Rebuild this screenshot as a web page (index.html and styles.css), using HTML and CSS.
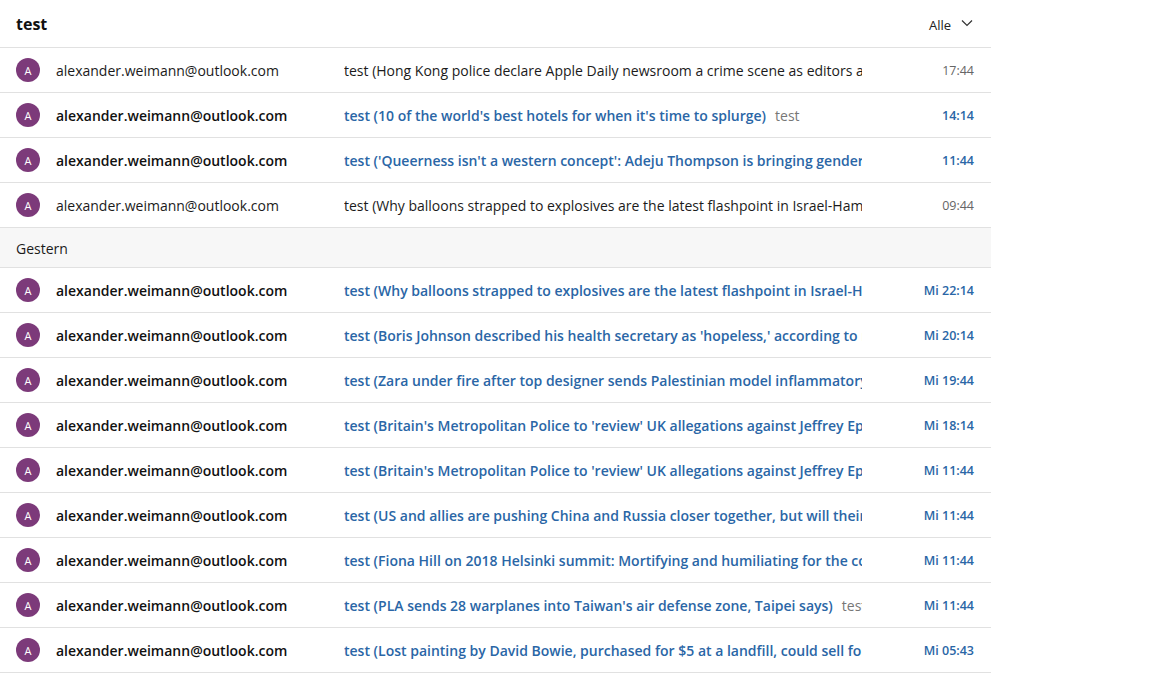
FILE: index.html
```html
<!DOCTYPE html>
<html lang="de">
<head>
<meta charset="utf-8">
<title>test</title>
<link rel="stylesheet" href="styles.css">
</head>
<body>
<div class="list">
  <div class="header">
    <div class="title">test</div>
    <div class="filter">Alle
      <svg class="chev" width="12" height="8" viewBox="0 0 12 8"><path d="M1 1.5 L6 6.5 L11 1.5" fill="none" stroke="#333" stroke-width="1.2"/></svg>
    </div>
  </div>

  <div class="row read">
    <div class="avatar">A</div>
    <div class="sender">alexander.weimann@outlook.com</div>
    <div class="subject">test (Hong Kong police declare Apple Daily newsroom a crime scene as editors are arrested)</div>
    <div class="time">17:44</div>
  </div>
  <div class="row unread">
    <div class="avatar">A</div>
    <div class="sender">alexander.weimann@outlook.com</div>
    <div class="subject">test (10 of the world's best hotels for when it's time to splurge)<span class="preview">test</span></div>
    <div class="time">14:14</div>
  </div>
  <div class="row unread">
    <div class="avatar">A</div>
    <div class="sender">alexander.weimann@outlook.com</div>
    <div class="subject">test ('Queerness isn't a western concept': Adeju Thompson is bringing gender-fluid fashion to Nigeria)</div>
    <div class="time">11:44</div>
  </div>
  <div class="row read">
    <div class="avatar">A</div>
    <div class="sender">alexander.weimann@outlook.com</div>
    <div class="subject">test (Why balloons strapped to explosives are the latest flashpoint in Israel-Hamas tensions)</div>
    <div class="time">09:44</div>
  </div>

  <div class="group">Gestern</div>

  <div class="row unread">
    <div class="avatar">A</div>
    <div class="sender">alexander.weimann@outlook.com</div>
    <div class="subject">test (Why balloons strapped to explosives are the latest flashpoint in Israel-Hamas tensions)</div>
    <div class="time">Mi 22:14</div>
  </div>
  <div class="row unread">
    <div class="avatar">A</div>
    <div class="sender">alexander.weimann@outlook.com</div>
    <div class="subject">test (Boris Johnson described his health secretary as 'hopeless,' according to messages)</div>
    <div class="time">Mi 20:14</div>
  </div>
  <div class="row unread">
    <div class="avatar">A</div>
    <div class="sender">alexander.weimann@outlook.com</div>
    <div class="subject">test (Zara under fire after top designer sends Palestinian model inflammatory messages)</div>
    <div class="time">Mi 19:44</div>
  </div>
  <div class="row unread">
    <div class="avatar">A</div>
    <div class="sender">alexander.weimann@outlook.com</div>
    <div class="subject">test (Britain's Metropolitan Police to 'review' UK allegations against Jeffrey Epstein)</div>
    <div class="time">Mi 18:14</div>
  </div>
  <div class="row unread">
    <div class="avatar">A</div>
    <div class="sender">alexander.weimann@outlook.com</div>
    <div class="subject">test (Britain's Metropolitan Police to 'review' UK allegations against Jeffrey Epstein)</div>
    <div class="time">Mi 11:44</div>
  </div>
  <div class="row unread">
    <div class="avatar">A</div>
    <div class="sender">alexander.weimann@outlook.com</div>
    <div class="subject">test (US and allies are pushing China and Russia closer together, but will their alliance last?)</div>
    <div class="time">Mi 11:44</div>
  </div>
  <div class="row unread">
    <div class="avatar">A</div>
    <div class="sender">alexander.weimann@outlook.com</div>
    <div class="subject">test (Fiona Hill on 2018 Helsinki summit: Mortifying and humiliating for the country)</div>
    <div class="time">Mi 11:44</div>
  </div>
  <div class="row unread">
    <div class="avatar">A</div>
    <div class="sender">alexander.weimann@outlook.com</div>
    <div class="subject">test (PLA sends 28 warplanes into Taiwan's air defense zone, Taipei says)<span class="preview">test</span></div>
    <div class="time">Mi 11:44</div>
  </div>
  <div class="row unread">
    <div class="avatar">A</div>
    <div class="sender">alexander.weimann@outlook.com</div>
    <div class="subject">test (Lost painting by David Bowie, purchased for $5 at a landfill, could sell for thousands)</div>
    <div class="time">Mi 05:43</div>
  </div>
</div>
</body>
</html>
```

FILE: styles.css
```css
html, body {
  margin: 0;
  padding: 0;
  background: #ffffff;
}
body {
  font-family: "Open Sans", "Noto Sans", "Liberation Sans", sans-serif;
  color: #1b1b1b;
}
.list {
  width: 991px;
}
.header {
  height: 47px;
  border-bottom: 1px solid #e1e1e1;
  display: flex;
  align-items: center;
  justify-content: space-between;
  padding: 0 18px 0 16px;
}
.title {
  font-size: 16px;
  font-weight: 700;
  color: #111;
}
.filter {
  display: flex;
  align-items: center;
  gap: 10px;
  font-size: 13px;
  color: #222;
  margin-top: 2px;
}
.chev {
  margin-top: -4px;
}
.row {
  height: 44px;
  border-bottom: 1px solid #e1e1e1;
  display: flex;
  align-items: center;
  padding-left: 16px;
  font-size: 14px;
}
.avatar {
  width: 24px;
  height: 24px;
  border-radius: 50%;
  background: #7c3a7a;
  color: #fff;
  font-size: 11px;
  display: flex;
  align-items: center;
  justify-content: center;
  flex: none;
  margin-right: 16px;
}
.sender {
  width: 288px;
  flex: none;
  white-space: nowrap;
  overflow: hidden;
}
.subject {
  width: 518px;
  flex: none;
  white-space: nowrap;
  overflow: hidden;
  text-overflow: clip;
}
.time {
  flex: 1;
  min-width: 0;
  text-align: right;
  padding-right: 17px;
  font-size: 12.5px;
  white-space: nowrap;
}
.read .sender, .read .subject {
  color: #1b1b1b;
}
.read .time {
  color: #666;
}
.unread .sender {
  font-weight: 600;
  color: #111;
}
.unread .subject {
  font-weight: 600;
  color: #2a66a6;
}
.unread .time {
  font-weight: 600;
  color: #2a66a6;
}
.preview {
  font-weight: 400;
  color: #777;
  margin-left: 9px;
}
.group {
  height: 38px;
  border-bottom: 1px solid #e1e1e1;
  background: #f7f7f7;
  display: flex;
  align-items: center;
  padding-left: 16px;
  padding-top: 1px;
  font-size: 14px;
  color: #1b1b1b;
  margin-top: -1px;
  border-top: 1px solid #e1e1e1;
}
```
